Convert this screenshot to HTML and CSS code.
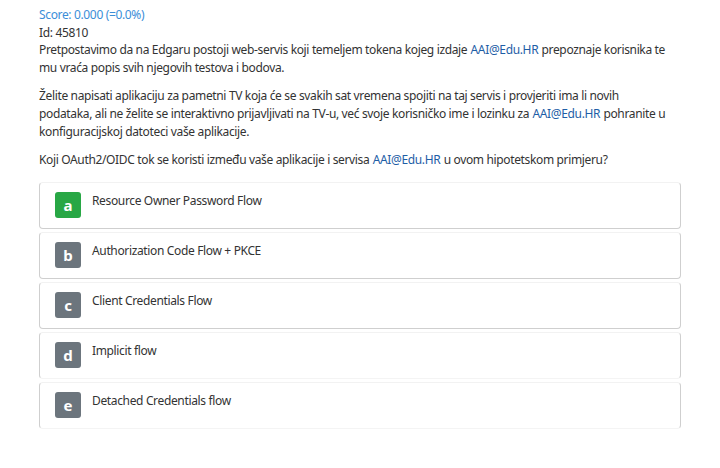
FILE: index.html
```html
<!DOCTYPE html>
<html lang="hr">
<head>
<meta charset="utf-8">
<link rel="stylesheet" href="styles.css">
</head>
<body>
<div class="page">
  <div class="score">Score: 0.000 (=0.0%)</div>
  <div class="id">Id: 45810</div>
  <p class="para first">Pretpostavimo da na Edgaru postoji web-servis koji temeljem tokena kojeg izdaje <span class="link">AAI@Edu.HR</span> prepoznaje korisnika te mu vraća popis svih njegovih testova i bodova.</p>
  <p class="para">Želite napisati aplikaciju za pametni TV koja će se svakih sat vremena spojiti na taj servis i provjeriti ima li novih podataka, ali ne želite se interaktivno prijavljivati na TV-u, već svoje korisničko ime i lozinku za <span class="link">AAI@Edu.HR</span> pohranite u konfiguracijskoj datoteci vaše aplikacije.</p>
  <p class="para">Koji OAuth2/OIDC tok se koristi između vaše aplikacije i servisa <span class="link">AAI@Edu.HR</span> u ovom hipotetskom primjeru?</p>
  <div class="options">
    <div class="option"><span class="badge green">a</span><span class="label">Resource Owner Password Flow</span></div>
    <div class="option"><span class="badge">b</span><span class="label">Authorization Code Flow + PKCE</span></div>
    <div class="option"><span class="badge">c</span><span class="label">Client Credentials Flow</span></div>
    <div class="option nobottom"><span class="badge">d</span><span class="label">Implicit flow</span></div>
    <div class="option nobottom"><span class="badge">e</span><span class="label">Detached Credentials flow</span></div>
  </div>
</div>
</body>
</html>
```
FILE: styles.css
```css
html, body {
  margin: 0;
  padding: 0;
  background: #ffffff;
}
body {
  font-family: "Noto Sans", "Open Sans", sans-serif;
  font-size: 12px;
  letter-spacing: -0.35px;
  color: #333333;
}
.page {
  padding: 6px 39px 0 39px;
  width: 642px;
}
.score {
  color: #3b8ed8;
  line-height: 18px;
}
.id {
  line-height: 17px;
}
.para {
  margin: 0 0 10px 0;
  line-height: 18px;
  max-width: 634px;
}
.para.first {
  margin-top: 0;
}
.link {
  color: #1e5ea6;
  margin: 0 0.5px;
}
.options {
  margin-top: 13px;
  display: flex;
  flex-direction: column;
  gap: 3px;
}
.option {
  height: 47px;
  box-sizing: border-box;
  border: 1px solid #cfcfcf;
  border-top-color: #f2f2f2;
  border-radius: 4px;
  display: flex;
  align-items: flex-start;
  padding: 9px 0 0 15px;
}
.option.nobottom {
  border-bottom-color: #f4f4f4;
}
.badge {
  width: 26px;
  height: 26px;
  border-radius: 3px;
  background: #6c757d;
  color: #ffffff;
  font-weight: bold;
  font-size: 15px;
  letter-spacing: 0;
  display: flex;
  align-items: center;
  justify-content: center;
  flex-shrink: 0;
}
.badge.green {
  background: #28a745;
}
.label {
  margin-left: 11px;
  line-height: 18px;
  font-size: 12px;
}
```
